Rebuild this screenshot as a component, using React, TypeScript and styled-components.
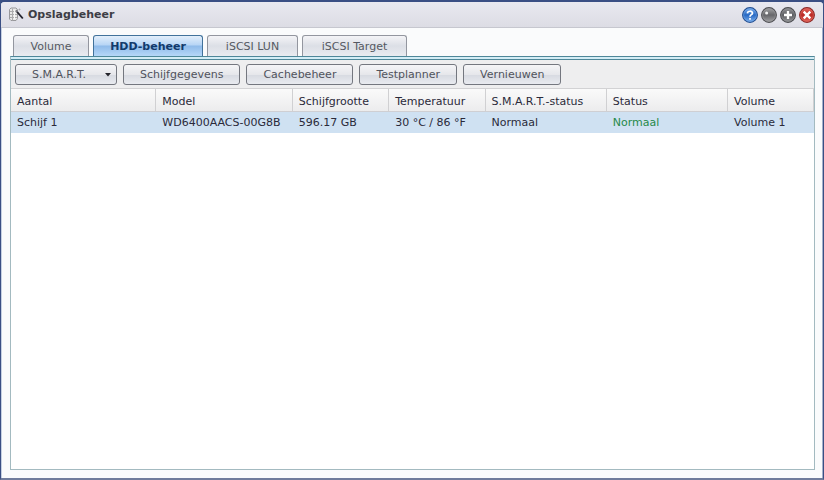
import React from "react";
import styled, { createGlobalStyle, css } from "styled-components";

const GlobalStyle = createGlobalStyle`
  *, *::before, *::after { box-sizing: border-box; }
  body {
    margin: 0;
    background: #3c5286;
    color: #2a2a3a;
    font: 11px/14px "DejaVu Sans", Verdana, sans-serif;
  }
  button { font: inherit; margin: 0; cursor: pointer; }
`;

const Window = styled.main`
  display: flex;
  flex-direction: column;
  min-height: 100vh;
  border: 1px solid #3a4f84;
  border-top-width: 2px;
  border-bottom: 2px solid #707c9c;
  border-radius: 5px 5px 0 0;
  background: #fafbfc;
  box-shadow: inset 1px 0 #c5d0e2, inset -1px 0 #a3b0ca;
  overflow: hidden;
`;

const TitleBar = styled.header`
  display: flex;
  align-items: center;
  justify-content: space-between;
  height: 26px;
  padding: 0 8px 0 7px;
  border-bottom: 1px solid #c6c7cf;
  background: linear-gradient(#e9e9f0, #dcdce4);
`;

const Title = styled.h1`
  display: flex;
  align-items: center;
  gap: 3px;
  margin: 0;
  font-size: 11px;
  line-height: 14px;
  color: #3d3d45;
`;

const WindowControls = styled.div`
  display: flex;
  gap: 3px;
`;

const ControlButton = styled.button`
  display: block;
  width: 16px;
  height: 16px;
  padding: 0;
  border: 0;
  background: none;

  svg { display: block; }
`;

const Content = styled.div`
  flex: 1;
  display: flex;
  flex-direction: column;
  padding: 7px 8px 8px 9px;
`;

const TabList = styled.div`
  display: flex;
  align-items: flex-end;
  gap: 4px;
  padding-left: 3px;
`;

const Tab = styled.button<{ $active?: boolean; $minWidth: number }>`
  min-width: ${({ $minWidth }) => $minWidth}px;
  height: 21px;
  padding: 2px 16px 0;
  border: 1px solid #93969f;
  border-bottom: 0;
  border-radius: 3px 3px 0 0;
  background: linear-gradient(#f4f4f7, #dcdfe6 50%, #e9ebf0);
  color: #555962;

  ${({ $active }) =>
    $active &&
    css`
      border-color: #41729b;
      background: linear-gradient(#e3effb, #b7d5f5 45%, #8fbbea 50%, #b5d7f8);
      color: #123a6b;
      font-weight: bold;
    `}
`;

const Panel = styled.section`
  flex: 1;
  display: flex;
  flex-direction: column;
  border: 1px solid #a3bac0;
  border-top: 1px solid #4e8799;
  background: #fff;
`;

const Strip = styled.div`
  height: 3px;
  border-bottom: 1px solid #4e8799;
  background: #d3edf6;
`;

const Toolbar = styled.div`
  display: flex;
  align-items: center;
  gap: 6px;
  height: 29px;
  padding: 0 4px;
  border-bottom: 1px solid #d2d2d4;
  background: #eeeeef;
`;

const ToolButton = styled.button`
  display: flex;
  align-items: center;
  justify-content: center;
  height: 21px;
  padding: 2px 16px 0;
  border: 1px solid #74777f;
  border-radius: 3px;
  background: linear-gradient(#f5f5f7, #e6e7eb 50%, #d8dbe2 55%, #e9ebf0);
  color: #50535c;
`;

const MenuButton = styled(ToolButton)`
  gap: 19px;
  padding-right: 5px;
`;

const DiskTable = styled.table`
  width: 100%;
  table-layout: fixed;
  border-collapse: separate;
  border-spacing: 0;
  text-align: left;
`;

const Column = styled.col<{ $share: number }>`
  width: ${({ $share }) => $share}%;
`;

const HeaderCell = styled.th`
  height: 23px;
  padding: 4px 0 0 6px;
  border-right: 1px solid #d0d0d2;
  border-bottom: 1px solid #cfcfd3;
  background: linear-gradient(#fafafa, #ececed);
  font-weight: normal;
  white-space: nowrap;
`;

const Cell = styled.td<{ $good?: boolean }>`
  height: 21px;
  padding: 0 0 0 6px;
  background: #cfe1f2;
  color: ${({ $good }) => ($good ? "#26894a" : "inherit")};
  white-space: nowrap;
`;

type ControlKind = "help" | "minimize" | "maximize" | "close";

const controls: { kind: ControlKind; label: string; light: string; dark: string; rim: string }[] = [
  { kind: "help", label: "Help", light: "#7eb2ef", dark: "#2869c4", rim: "#244f91" },
  { kind: "minimize", label: "Minimaliseren", light: "#a5a5a7", dark: "#66666a", rim: "#505054" },
  { kind: "maximize", label: "Maximaliseren", light: "#98999c", dark: "#5c5d61", rim: "#4c4d51" },
  { kind: "close", label: "Sluiten", light: "#e76c61", dark: "#b92925", rim: "#8b2a29" },
];

function ControlIcon({ kind, light, dark, rim }: { kind: ControlKind; light: string; dark: string; rim: string }) {
  const fill = `fill-${kind}`;
  return (
    <svg width="16" height="16" viewBox="0 0 16 16" aria-hidden="true">
      <defs>
        <linearGradient id={fill} x1="0" y1="0" x2="0" y2="1">
          <stop offset="0" stopColor={light} />
          <stop offset="0.5" stopColor={dark} />
          <stop offset="1" stopColor={light} />
        </linearGradient>
      </defs>
      <circle cx="8" cy="8" r="7.4" fill={`url(#${fill})`} stroke={rim} strokeWidth="1.1" />
      <circle cx="8" cy="8" r="6.4" fill="none" stroke={light} strokeOpacity="0.6" strokeWidth="0.8" />
      {kind === "help" && (
        <g fill="none" stroke="#fff" strokeWidth="1.7">
          <path d="M5.4 6.4C5.5 3.5 10.6 3.6 10.5 6.1C10.4 7.8 8 7.6 8 9.7" />
          <path d="M8 11v1.7" />
        </g>
      )}
      {kind === "minimize" && <circle cx="5.6" cy="6" r="1.5" fill="#f5f5f5" />}
      {kind === "maximize" && <path d="M8 4v8M4 8h8" stroke="#fff" strokeWidth="2.3" />}
      {kind === "close" && <path d="M4.7 4.7l6.6 6.6M11.3 4.7l-6.6 6.6" stroke="#fff" strokeWidth="2.4" />}
    </svg>
  );
}

function StorageIcon() {
  return (
    <svg width="17" height="16" viewBox="0 0 17 16" aria-hidden="true">
      <path d="M1.5 2.5L3 1H8L9.5 2.5V11.5L8 13.5H3L1.5 12z" fill="#e8e8e8" stroke="#98989b" />
      <path d="M2 4.5h7M2 7.5h7M2 10.5h7M4.5 1.5v12" stroke="#ababad" />
      <path d="M6.5 3v9" stroke="#f7f7f7" />
      <path d="M8.8 4.5l6 7" stroke="#24242e" strokeWidth="1.9" />
      <path d="M8 3.2l1.5 1.7" stroke="#77777d" strokeWidth="1.8" />
      <path d="M10.5 2.5h2M11.5 1.5v2" stroke="#a8a8ad" strokeWidth="0.8" />
    </svg>
  );
}

function CaretIcon() {
  return (
    <svg width="6" height="4" viewBox="0 0 6 4" aria-hidden="true">
      <path d="M0 0h6L3 3.4z" fill="#24242b" />
    </svg>
  );
}

const tabs = [
  { name: "Volume", minWidth: 76 },
  { name: "HDD-beheer", minWidth: 110 },
  { name: "iSCSI LUN", minWidth: 91 },
  { name: "iSCSI Target", minWidth: 105 },
];
const activeTab = "HDD-beheer";
const actions = ["Schijfgegevens", "Cachebeheer", "Testplanner", "Vernieuwen"];
const columns = [
  { name: "Aantal", share: 18.1 },
  { name: "Model", share: 17 },
  { name: "Schijfgrootte", share: 12 },
  { name: "Temperatuur", share: 12 },
  { name: "S.M.A.R.T.-status", share: 15.1 },
  { name: "Status", share: 15.1 },
  { name: "Volume", share: 10.7 },
];
const disks = [["Schijf 1", "WD6400AACS-00G8B", "596.17 GB", "30 °C / 86 °F", "Normaal", "Normaal", "Volume 1"]];

export default function App() {
  return (
    <>
      <GlobalStyle />
      <Window>
        <TitleBar>
          <Title><StorageIcon />Opslagbeheer</Title>
          <WindowControls>
            {controls.map(({ label, ...icon }) => (
              <ControlButton key={label} type="button" aria-label={label}>
                <ControlIcon {...icon} />
              </ControlButton>
            ))}
          </WindowControls>
        </TitleBar>
        <Content>
          <TabList role="tablist">
            {tabs.map(({ name, minWidth }) => (
              <Tab
                key={name}
                type="button"
                role="tab"
                aria-selected={name === activeTab}
                $active={name === activeTab}
                $minWidth={minWidth}
              >
                {name}
              </Tab>
            ))}
          </TabList>
          <Panel role="tabpanel" aria-label={activeTab}>
            <Strip />
            <Toolbar role="toolbar">
              <MenuButton type="button" aria-haspopup="menu">S.M.A.R.T.<CaretIcon /></MenuButton>
              {actions.map((action) => (
                <ToolButton key={action} type="button">{action}</ToolButton>
              ))}
            </Toolbar>
            <DiskTable>
              <colgroup>
                {columns.map(({ name, share }) => <Column key={name} $share={share} />)}
              </colgroup>
              <thead>
                <tr>
                  {columns.map(({ name }) => <HeaderCell key={name} scope="col">{name}</HeaderCell>)}
                </tr>
              </thead>
              <tbody>
                {disks.map((disk) => (
                  <tr key={disk[0]}>
                    {disk.map((value, i) => (
                      <Cell key={columns[i].name} $good={columns[i].name === "Status"}>{value}</Cell>
                    ))}
                  </tr>
                ))}
              </tbody>
            </DiskTable>
          </Panel>
        </Content>
      </Window>
    </>
  );
}
